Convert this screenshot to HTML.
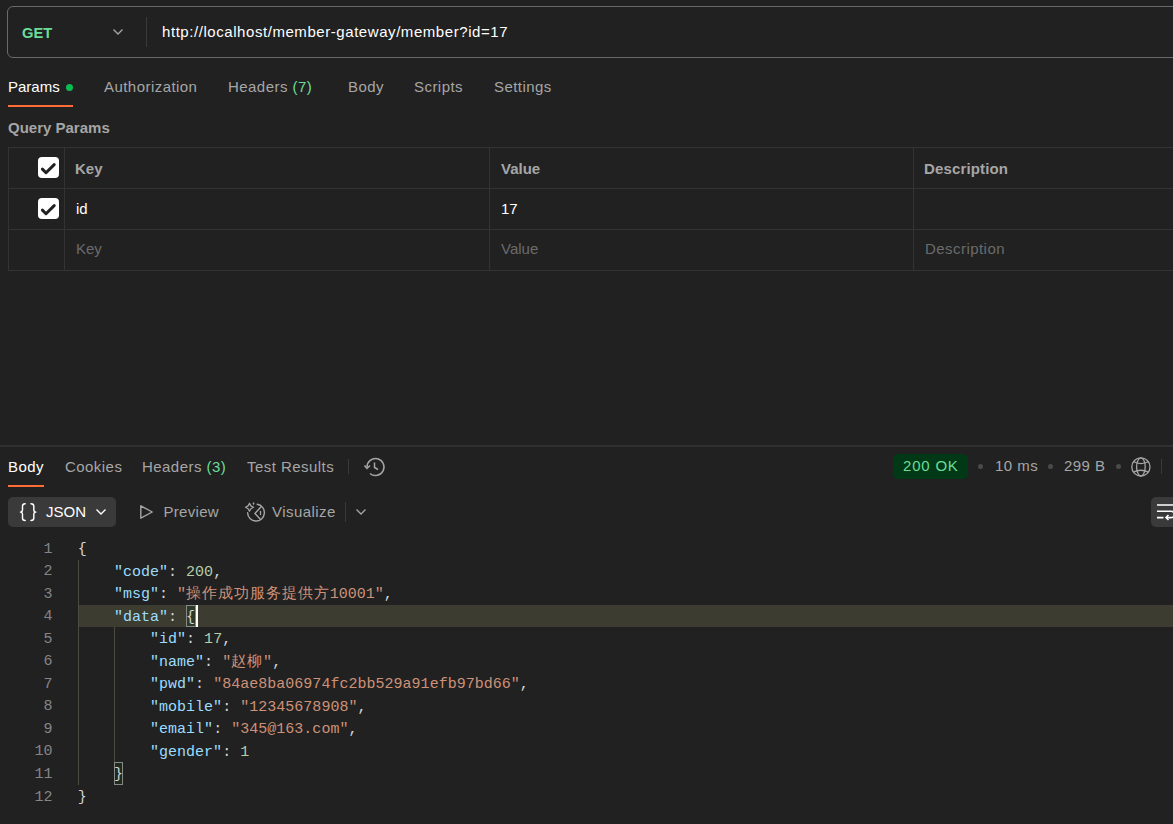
<!DOCTYPE html>
<html><head><meta charset="utf-8">
<style>
*{margin:0;padding:0;box-sizing:border-box}
html,body{width:1173px;height:824px;overflow:hidden;background:#212121}
body{position:relative;font-family:"Liberation Sans",sans-serif;color:#fff;font-size:15px}
.a{position:absolute;white-space:nowrap}
.t{position:absolute;white-space:nowrap;line-height:20px;height:20px}
.g{color:#a6a6a6;letter-spacing:0.45px}
.gr{color:#6bdd9a}
.ln{position:absolute;background:#333}
svg{position:absolute;overflow:visible}
.code{position:absolute;left:77.8px;top:539px;font-family:"Liberation Mono",monospace;font-size:15px;line-height:22.55px;letter-spacing:0.02px;color:#d4d4d4;white-space:pre}
.code div{height:22.55px}
.cj{letter-spacing:0.95px}
.nums{position:absolute;left:0;width:52.5px;top:538.5px;font-family:"Liberation Mono",monospace;font-size:15px;line-height:22.55px;color:#858585;text-align:right;white-space:pre}
.k{color:#9cdcfe}.s{color:#ce9178}.n{color:#b5cea8}
</style></head><body>

<!-- URL bar -->
<div class="a" style="left:7px;top:6px;width:1200px;height:52px;border:1px solid #6a6a6a;border-radius:6px"></div>
<div class="t" style="left:22px;top:23px;color:#6bdd9a;font-weight:bold;font-size:15.5px;transform:scaleX(0.95);transform-origin:0 0">GET</div>
<svg style="left:113px;top:29px" width="10" height="6" viewBox="0 0 10 6"><path d="M0.5 0.5L5 5L9.5 0.5" fill="none" stroke="#a6a6a6" stroke-width="1.3"/></svg>
<div class="ln" style="left:146px;top:17px;width:1px;height:30px;background:#3a3a3a"></div>
<div class="t" style="left:162px;top:22px;color:#fff;letter-spacing:0.56px">http://localhost/member-gateway/member?id=17</div>

<!-- Request tabs -->
<div class="t" style="left:8px;top:77px;color:#fff">Params</div>
<div class="a" style="left:66px;top:84px;width:7px;height:7px;border-radius:50%;background:#0cbb52"></div>
<div class="ln" style="left:8px;top:105px;width:65px;height:2px;background:#ff6c37"></div>
<div class="t g" style="left:104px;top:77px">Authorization</div>
<div class="t g" style="left:228px;top:77px">Headers <span class="gr">(7)</span></div>
<div class="t g" style="left:348px;top:77px">Body</div>
<div class="t g" style="left:414px;top:77px">Scripts</div>
<div class="t g" style="left:494px;top:77px">Settings</div>

<div class="t" style="left:8px;top:118px;font-weight:bold;color:#a6a6a6">Query Params</div>

<!-- Table -->
<div class="a" style="left:8px;top:147px;width:1200px;height:124px;border:1px solid #333"></div>
<div class="ln" style="left:8px;top:188px;width:1200px;height:1px"></div>
<div class="ln" style="left:8px;top:229px;width:1200px;height:1px"></div>
<div class="ln" style="left:64px;top:147px;width:1px;height:124px"></div>
<div class="ln" style="left:489px;top:147px;width:1px;height:124px"></div>
<div class="ln" style="left:913px;top:147px;width:1px;height:124px"></div>

<div class="a" style="left:37.5px;top:157.4px;width:21px;height:21px;border-radius:4px;background:#fff"></div>
<svg style="left:37.5px;top:157.4px" width="21" height="21" viewBox="0 0 21 21"><path d="M4.4 12.1L8 15.7L16.2 7.6" fill="none" stroke="#212121" stroke-width="3" stroke-linecap="round" stroke-linejoin="round"/></svg>
<div class="a" style="left:37.5px;top:198.4px;width:21px;height:21px;border-radius:4px;background:#fff"></div>
<svg style="left:37.5px;top:198.4px" width="21" height="21" viewBox="0 0 21 21"><path d="M4.4 12.1L8 15.7L16.2 7.6" fill="none" stroke="#212121" stroke-width="3" stroke-linecap="round" stroke-linejoin="round"/></svg>

<div class="t g" style="left:75px;top:159px;font-weight:bold;letter-spacing:0">Key</div>
<div class="t g" style="left:501px;top:159px;font-weight:bold;letter-spacing:0">Value</div>
<div class="t g" style="left:924px;top:159px;font-weight:bold;letter-spacing:0.15px">Description</div>
<div class="t" style="left:76px;top:199px">id</div>
<div class="t" style="left:501px;top:199px">17</div>
<div class="t" style="left:76px;top:239px;color:#6b6b6b">Key</div>
<div class="t" style="left:501px;top:239px;color:#6b6b6b">Value</div>
<div class="t" style="left:925px;top:239px;color:#6b6b6b;letter-spacing:0.45px">Description</div>

<!-- divider -->
<div class="ln" style="left:0;top:445px;width:1173px;height:2px;background:#303030"></div>

<!-- Response tabs -->
<div class="t" style="left:8px;top:457px;letter-spacing:0.45px">Body</div>
<div class="ln" style="left:8px;top:485px;width:36px;height:2px;background:#ff6c37"></div>
<div class="t g" style="left:65px;top:457px">Cookies</div>
<div class="t g" style="left:142px;top:457px">Headers <span class="gr">(3)</span></div>
<div class="t g" style="left:247px;top:457px">Test Results</div>
<div class="ln" style="left:348px;top:459px;width:1px;height:15px;background:#3a3a3a"></div>
<svg style="left:364px;top:457px" width="22" height="20" viewBox="0 0 22 20"><path d="M3 10A8.5 8.5 0 1 1 6 16.5" fill="none" stroke="#a6a6a6" stroke-width="1.5"/><path d="M0.5 8.5L3 11.5L6 8.5" fill="none" stroke="#a6a6a6" stroke-width="1.5"/><path d="M10.5 5.5V10.5L14 12.5" fill="none" stroke="#a6a6a6" stroke-width="1.5"/></svg>

<div class="a" style="left:893px;top:454px;width:75px;height:25px;border-radius:5px;background:#013816"></div>
<div class="t gr" style="left:903px;top:456px;letter-spacing:0.8px">200 OK</div>
<div class="a" style="left:978px;top:464px;width:5px;height:5px;border-radius:50%;background:#4a4a4a"></div>
<div class="t g" style="left:995px;top:456px">10 ms</div>
<div class="a" style="left:1048px;top:464px;width:5px;height:5px;border-radius:50%;background:#4a4a4a"></div>
<div class="t g" style="left:1064px;top:456px">299 B</div>
<div class="a" style="left:1116px;top:464px;width:5px;height:5px;border-radius:50%;background:#4a4a4a"></div>
<svg style="left:1131px;top:457px" width="20" height="20" viewBox="0 0 20 20"><circle cx="9.9" cy="9.9" r="9.1" fill="none" stroke="#a6a6a6" stroke-width="1.3"/><ellipse cx="9.9" cy="9.9" rx="4.3" ry="9.1" fill="none" stroke="#a6a6a6" stroke-width="1.3"/><path d="M2.2 4.5Q9.9 8.6 17.6 4.5M2.2 15.3Q9.9 11.2 17.6 15.3" fill="none" stroke="#a6a6a6" stroke-width="1.3"/></svg>
<div class="ln" style="left:1161px;top:459px;width:1px;height:15px;background:#3a3a3a"></div>

<!-- Toolbar -->
<div class="a" style="left:8px;top:497px;width:108px;height:30px;border-radius:5px;background:#3a3a3a"></div>
<svg style="left:18px;top:502px" width="20" height="20" viewBox="0 0 20 20"><path d="M7.2 1.8C5.3 1.8 4.5 2.6 4.5 4.3V7.8C4.5 9.1 3.7 10.1 2.4 10.1C3.7 10.1 4.5 11 4.5 12.3V16.3C4.5 17.9 5.3 18.5 7.2 18.5M13 1.8C14.9 1.8 15.8 2.6 15.8 4.3V7.8C15.8 9.1 16.6 10.1 17.9 10.1C16.6 10.1 15.8 11 15.8 12.3V16.3C15.8 17.9 14.9 18.5 13 18.5" fill="none" stroke="#fff" stroke-width="1.45" stroke-linecap="round" stroke-linejoin="round"/></svg>
<div class="t" style="left:46px;top:502px">JSON</div>
<svg style="left:96px;top:509px" width="10" height="6" viewBox="0 0 10 6"><path d="M0.5 0.5L5 5L9.5 0.5" fill="none" stroke="#fff" stroke-width="1.4"/></svg>
<svg style="left:140px;top:505px" width="13" height="14" viewBox="0 0 13 14"><path d="M0.8 0.8L12.2 7L0.8 13.2Z" fill="none" stroke="#a6a6a6" stroke-width="1.4" stroke-linejoin="round"/></svg>
<div class="t g" style="left:163.5px;top:502px;letter-spacing:0.3px">Preview</div>
<svg style="left:240px;top:499px" width="30" height="26" viewBox="0 0 30 26"><path d="M17.2 5.3A8.4 8.4 0 1 1 7.6 13.8" fill="none" stroke="#a6a6a6" stroke-width="1.4" stroke-linecap="round"/><path d="M21.4 7.4L14.9 14.4L20.4 20.2" fill="none" stroke="#a6a6a6" stroke-width="1.4" stroke-linejoin="round"/><path d="M20.5 12.4V15.6" stroke="#a6a6a6" stroke-width="1.3" stroke-linecap="round"/><path d="M9.5 4.2L10.9 6.9L13.5 8.3L10.9 9.7L9.5 12.3L8.1 9.7L5.5 8.3L8.1 6.9Z" fill="none" stroke="#a6a6a6" stroke-width="1.25" stroke-linejoin="round"/><path d="M13.5 3L14.5 4.6L13.5 6.3L12.6 4.6Z" fill="#a6a6a6"/></svg>
<div class="t g" style="left:272px;top:502px">Visualize</div>
<div class="ln" style="left:345px;top:502px;width:1px;height:20px;background:#3a3a3a"></div>
<svg style="left:356px;top:509px" width="10" height="6" viewBox="0 0 10 6"><path d="M0.5 0.5L5 5L9.5 0.5" fill="none" stroke="#a6a6a6" stroke-width="1.3"/></svg>

<div class="a" style="left:1151px;top:497px;width:40px;height:30px;border-radius:5px;background:#3a3a3a"></div>
<svg style="left:1157px;top:504px" width="20" height="16" viewBox="0 0 20 16"><path d="M0 1H20M0 7.3H14A3 3 0 0 1 14 13.6H10M0 13.6H6.5" fill="none" stroke="#fff" stroke-width="1.6"/><path d="M11.5 11L9 13.6L11.5 16" fill="none" stroke="#fff" stroke-width="1.6"/></svg>

<!-- Code editor -->
<div class="a" style="left:79px;top:605px;width:1100px;height:22px;background:#3d3c31"></div>
<div class="ln" style="left:78px;top:560px;width:1px;height:225px;background:#4b4b42"></div>
<div class="ln" style="left:114px;top:627px;width:1px;height:135px;background:#4b4b42"></div>
<div class="a" style="left:186px;top:605px;width:10px;height:22px;border:1px solid #888;background:#2e3a28"></div>
<div class="a" style="left:196px;top:605px;width:2px;height:22px;background:#fff"></div>
<div class="a" style="left:114px;top:762px;width:9px;height:23px;border:1px solid #888;background:#1f2a1e"></div>

<div class="nums"><div>1</div><div>2</div><div>3</div><div>4</div><div>5</div><div>6</div><div>7</div><div>8</div><div>9</div><div>10</div><div>11</div><div>12</div></div>
<div class="code"><div>{</div><div>    <span class="k">"code"</span>: <span class="n">200</span>,</div><div>    <span class="k">"msg"</span>: <span class="s">"<span class="cj">操作成功服务提供方</span>10001"</span>,</div><div>    <span class="k">"data"</span>: {</div><div>        <span class="k">"id"</span>: <span class="n">17</span>,</div><div>        <span class="k">"name"</span>: <span class="s">"<span class="cj">赵柳</span>"</span>,</div><div>        <span class="k">"pwd"</span>: <span class="s">"84ae8ba06974fc2bb529a91efb97bd66"</span>,</div><div>        <span class="k">"mobile"</span>: <span class="s">"12345678908"</span>,</div><div>        <span class="k">"email"</span>: <span class="s">"345@163.com"</span>,</div><div>        <span class="k">"gender"</span>: <span class="n">1</span></div><div>    }</div><div>}</div></div>

</body></html>
